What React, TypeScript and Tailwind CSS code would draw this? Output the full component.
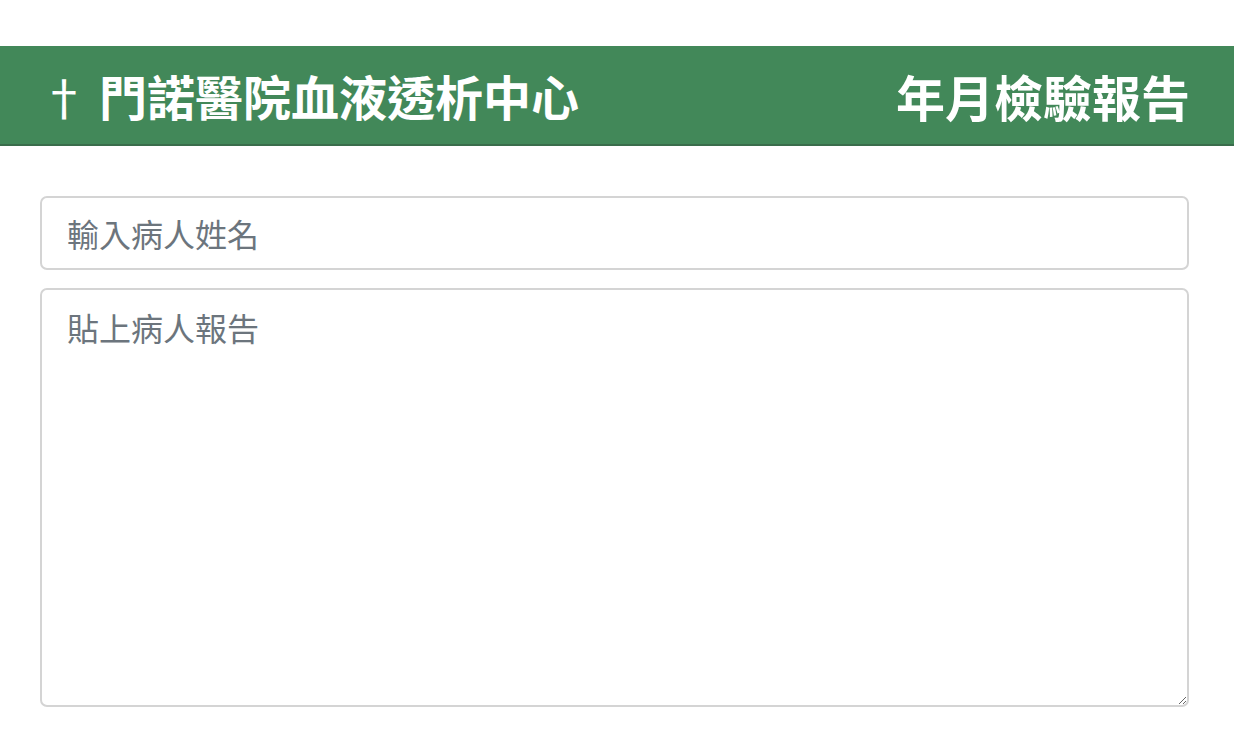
export default function App() {
  const font = { fontFamily: '"Noto Sans CJK TC", "Noto Sans", sans-serif' };

  return (
    <div className="min-h-screen bg-white" style={font}>
      <div className="h-[46px]" />
      {/* Header bar */}
      <header className="flex h-[100px] items-center justify-between border-b-2 border-[#3a6d4b] bg-[#428859] pl-[40px] pr-[44px] text-white">
        <h1 className="text-[48px] font-bold leading-none">
          <span className="font-normal">†</span> 門諾醫院血液透析中心
        </h1>
        <h2 className="text-[49px] font-bold leading-none">年月檢驗報告</h2>
      </header>

      {/* Form */}
      <div className="flex flex-col gap-[18px] px-[40px] pt-[50px] pr-[45px]">
        <input
          type="text"
          placeholder="輸入病人姓名"
          className="h-[74px] w-full rounded-[7px] border-2 border-[#d4d4d4] px-[25px] text-[32px] text-[#495057] outline-none placeholder:text-[#6c757d]"
          style={font}
        />
        <textarea
          placeholder="貼上病人報告"
          className="h-[419px] w-full resize-y rounded-[7px] border-2 border-[#d4d4d4] px-[25px] py-[13px] text-[32px] leading-[1.5] text-[#495057] outline-none placeholder:text-[#6c757d]"
          style={font}
        />
      </div>
    </div>
  );
}
